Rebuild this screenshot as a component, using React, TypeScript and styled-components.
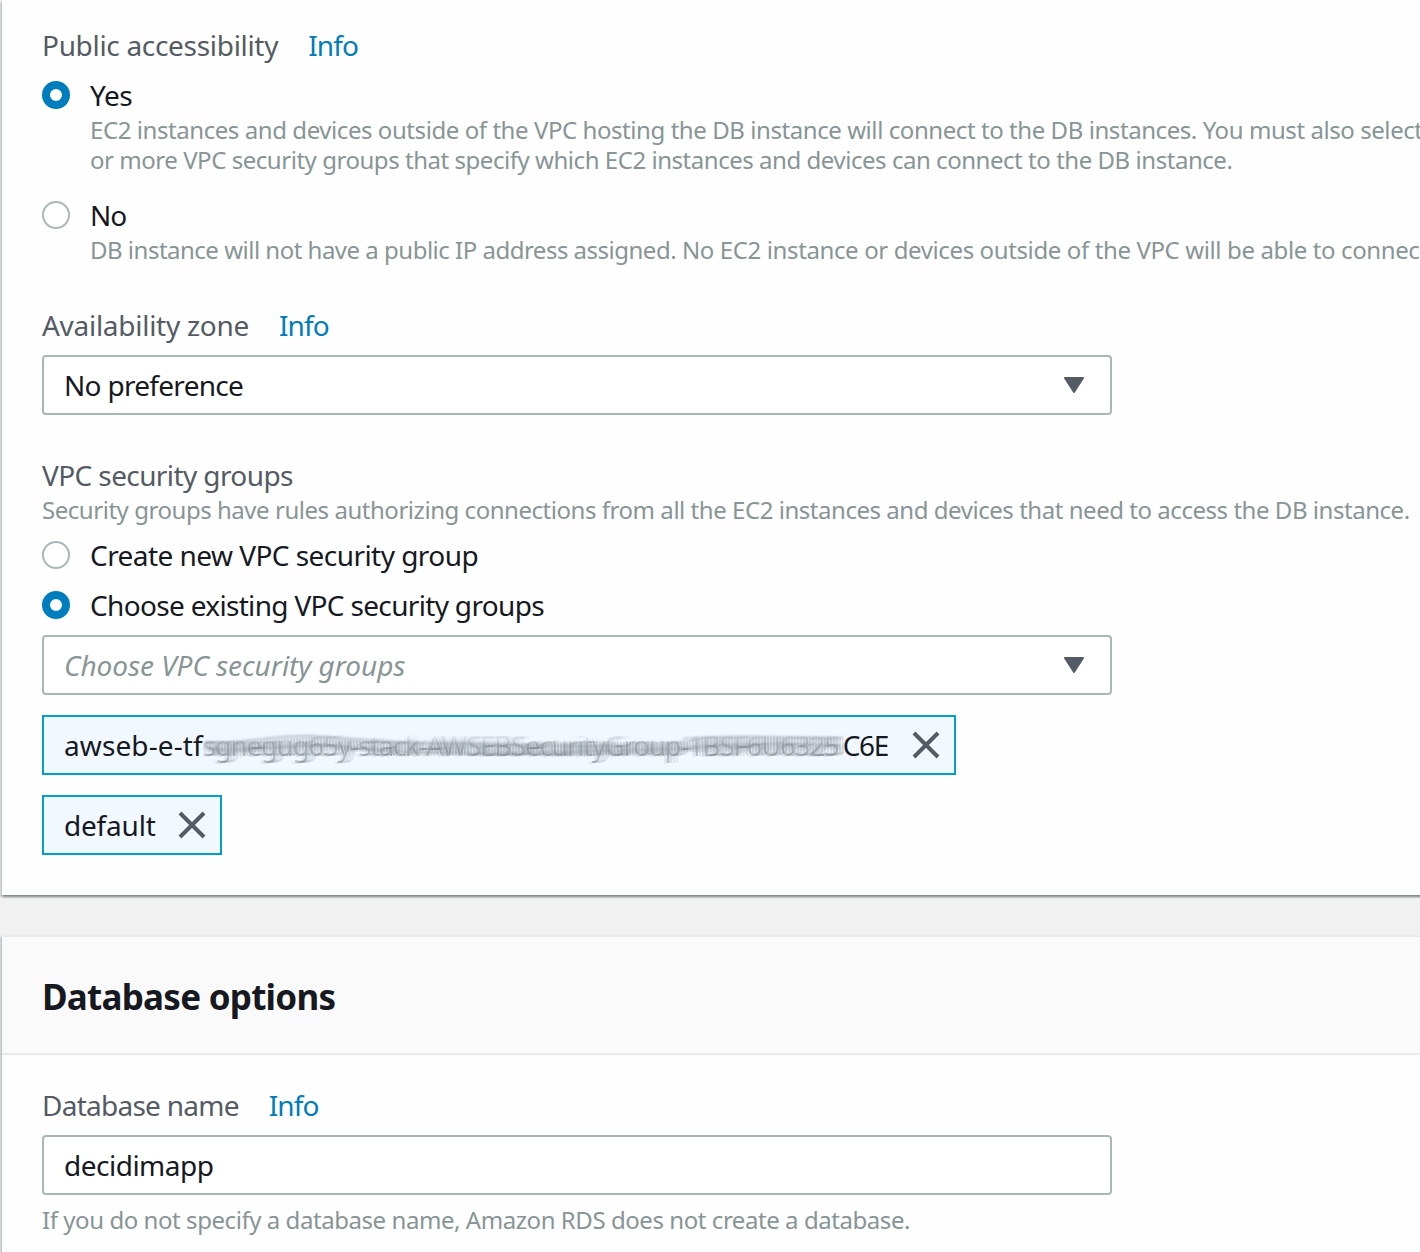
import React from 'react';
import styled, { createGlobalStyle } from 'styled-components';

const colors = {
  page: '#f1f1f1',
  card: '#fefefe',
  header: '#fafafa',
  divider: '#eaeaea',
  text: '#16191f',
  label: '#545b64',
  hint: '#879596',
  link: '#007dbc',
  border: '#aab7b8',
  token: '#00a1c9',
  tokenFill: '#f1f8ff',
};

const GlobalStyle = createGlobalStyle`
  body {
    margin: 0;
    background: ${colors.page};
    color: ${colors.text};
    font-family: 'Noto Sans', 'Open Sans', sans-serif;
    overflow: hidden;
  }
  *, *::before, *::after { box-sizing: border-box; }
`;

const Page = styled.main`
  display: flex;
  flex-direction: column;
  gap: 40px;
  height: 1252px;
  padding-left: 2px;
  overflow: hidden;
`;

const Card = styled.section<{ $ruled?: boolean }>`
  flex: none;
  width: 1600px;
  background: ${colors.card};
  border-top: ${(p) => (p.$ruled ? `2px solid ${colors.divider}` : 'none')};
  box-shadow:
    0 2px 2px rgba(0, 28, 36, 0.3),
    2px 2px 2px rgba(0, 28, 36, 0.15),
    -2px 2px 2px rgba(0, 28, 36, 0.15);
`;

const CardHeader = styled.header`
  display: flex;
  align-items: center;
  height: 118px;
  padding: 4px 40px 0;
  background: ${colors.header};
  border-bottom: 2px solid ${colors.divider};
`;

const CardTitle = styled.h2`
  margin: 0;
  font-size: 35px;
  line-height: 44px;
  font-weight: 700;
  letter-spacing: -0.75px;
`;

const CardBody = styled.div<{ $top: number }>`
  display: flex;
  flex-direction: column;
  gap: 45px;
  padding: ${(p) => p.$top}px 40px 40px;
`;

const Field = styled.div`
  display: flex;
  flex-direction: column;
`;

const LabelRow = styled.div`
  display: flex;
  gap: 30px;
  height: 30px;
`;

const Label = styled.span<{ $tracking: number }>`
  color: ${colors.label};
  font-size: 28px;
  line-height: 30px;
  letter-spacing: ${(p) => p.$tracking}px;
  white-space: nowrap;
`;

const InfoLink = styled.a`
  color: ${colors.link};
  font-size: 28px;
  line-height: 30px;
  letter-spacing: -0.9px;
  text-decoration: none;
`;

const Hint = styled.p<{ $gap?: number; $tracking?: number }>`
  margin: ${(p) => p.$gap ?? 0}px 0 0;
  color: ${colors.hint};
  font-size: 24px;
  line-height: 30px;
  letter-spacing: ${(p) => p.$tracking ?? -0.46}px;
  white-space: pre;
`;

const HintLine = styled.span<{ $tracking: number }>`
  display: block;
  letter-spacing: ${(p) => p.$tracking}px;
`;

const RadioList = styled.div<{ $top: number; $gap: number }>`
  display: flex;
  flex-direction: column;
  gap: ${(p) => p.$gap}px;
  margin-top: ${(p) => p.$top}px;
`;

const RadioOption = styled.label`
  display: grid;
  grid-template-columns: 28px auto;
  column-gap: 20px;
  align-items: start;
`;

const RadioDot = styled.span<{ $checked?: boolean }>`
  width: 28px;
  height: 28px;
  margin-top: 1px;
  border-radius: 50%;
  background: #fff;
  border: ${(p) => (p.$checked ? `8px solid ${colors.link}` : `2px solid ${colors.border}`)};
`;

const RadioText = styled.div<{ $tracking: number }>`
  font-size: 28px;
  line-height: 30px;
  letter-spacing: ${(p) => p.$tracking}px;
  white-space: nowrap;
`;

const Control = styled.div<{ $placeholder?: boolean; $tracking: number }>`
  display: flex;
  align-items: center;
  justify-content: space-between;
  width: 1070px;
  height: 60px;
  margin-top: 15px;
  padding: 0 26px 0 20px;
  border: 2px solid ${colors.border};
  border-radius: 4px;
  background: #fff;
  color: ${(p) => (p.$placeholder ? colors.hint : colors.text)};
  font-size: 28px;
  line-height: 56px;
  font-style: ${(p) => (p.$placeholder ? 'italic' : 'normal')};
  letter-spacing: ${(p) => p.$tracking}px;
`;

const TokenList = styled.div`
  display: flex;
  flex-direction: column;
  align-items: flex-start;
  gap: 20px;
  margin-top: 20px;
`;

const Token = styled.div<{ $width: number }>`
  display: flex;
  align-items: center;
  justify-content: space-between;
  width: ${(p) => p.$width}px;
  height: 60px;
  padding: 0 14px 0 20px;
  border: 2px solid ${colors.token};
  background: ${colors.tokenFill};
  font-size: 28px;
  line-height: 56px;
`;

const TokenText = styled.span<{ $tracking: number }>`
  display: flex;
  letter-spacing: ${(p) => p.$tracking}px;
  white-space: nowrap;
`;

const TokenTail = styled.span`
  letter-spacing: -1.3px;
`;

const Smudged = styled.span`
  position: relative;
  width: 640px;
  height: 56px;
`;

const SmudgedText = styled.span`
  display: block;
  letter-spacing: -1.42px;
  color: rgba(60, 66, 74, 0.32);
  filter: blur(0.5px);
  -webkit-mask-image: linear-gradient(transparent 16px, #000 30px, #000 100%);
  mask-image: linear-gradient(transparent 16px, #000 30px, #000 100%);
  text-shadow:
    3px 0 rgba(60, 66, 74, 0.12),
    6px 0 rgba(60, 66, 74, 0.1),
    9px -1px rgba(60, 66, 74, 0.09),
    -3px 1px rgba(60, 66, 74, 0.09);
`;

const SmearDrawing = styled.svg`
  position: absolute;
  left: 0;
  top: 0;
`;

const TriangleIcon = () => (
  <svg width="20" height="16" viewBox="0 0 20 16">
    <path d="M1 1H19L10 15Z" fill={colors.label} stroke={colors.label} strokeWidth="2" strokeLinejoin="round" />
  </svg>
);

const CloseIcon = () => (
  <svg width="28" height="28" viewBox="0 0 28 28">
    <path d="M2 2L26 26M26 2L2 26" stroke={colors.label} strokeWidth="4" fill="none" />
  </svg>
);

const Smear = () => (
  <SmearDrawing width="650" height="56" viewBox="0 0 650 56" fill="none">
    <defs>
      <filter id="soft" x="-5%" y="-50%" width="110%" height="200%">
        <feGaussianBlur stdDeviation="1.3" />
      </filter>
      <pattern id="hatch" width="3" height="60" patternUnits="userSpaceOnUse">
        <path d="M1 0V60" stroke="#6f7780" strokeWidth="1" />
      </pattern>
    </defs>
    <g filter="url(#soft)" stroke="#8b9299">
      <path d="M0 29C40 34 70 23 110 24S180 30 230 30S300 32 340 33S430 32 490 29S580 27 636 27" strokeWidth="12" opacity=".16" />
      <path d="M2 25C50 27 70 17 110 19S180 27 240 26S330 30 420 29" strokeWidth="2" opacity=".4" />
      <path d="M5 32C60 36 90 25 140 30S230 38 300 36S430 35 480 31S590 26 636 29" strokeWidth="2" opacity=".4" />
      <path d="M480 22C520 18 580 20 640 21" strokeWidth="2" opacity=".45" />
    </g>
    <path
      d="M2 25C50 30 80 18 120 21S200 27 240 26L310 27L400 25L480 25L500 20L640 21L642 37L480 35L390 39L200 36L120 34L10 36Z"
      fill="url(#hatch)"
      opacity=".35"
    />
  </SmearDrawing>
);

export default function App() {
  return (
    <>
      <GlobalStyle />
      <Page>
        <Card>
          <CardBody $top={30}>
            <Field>
              <LabelRow>
                <Label $tracking={-0.31}>Public accessibility</Label>
                <InfoLink>Info</InfoLink>
              </LabelRow>
              <RadioList $top={20} $gap={25}>
                <RadioOption>
                  <RadioDot $checked />
                  <div>
                    <RadioText $tracking={-0.5}>Yes</RadioText>
                    <Hint $gap={5}>
                      <HintLine $tracking={-0.43}>
                        EC2 instances and devices outside of the VPC hosting the DB instance will connect to the DB instances. You must also select one
                      </HintLine>
                      <HintLine $tracking={-0.46}>
                        or more VPC security groups that specify which EC2 instances and devices can connect to the DB instance.
                      </HintLine>
                    </Hint>
                  </div>
                </RadioOption>
                <RadioOption>
                  <RadioDot />
                  <div>
                    <RadioText $tracking={-1}>No</RadioText>
                    <Hint $gap={5}>
                      <HintLine $tracking={-0.5}>
                        DB instance will not have a public IP address assigned.
                        <HintTail> No EC2 instance or devices outside of the VPC will be able to connect.</HintTail>
                      </HintLine>
                    </Hint>
                  </div>
                </RadioOption>
              </RadioList>
            </Field>
            <Field>
              <LabelRow>
                <Label $tracking={-0.28}>Availability zone</Label>
                <InfoLink>Info</InfoLink>
              </LabelRow>
              <Control $tracking={-0.7}>
                No preference
                <TriangleIcon />
              </Control>
            </Field>
            <Field>
              <Label $tracking={-0.6}>VPC security groups</Label>
              <Hint $gap={5}>
                Security groups have rules authorizing connections from all the EC2 instances and devices that need to access the DB instance.
              </Hint>
              <RadioList $top={15} $gap={20}>
                <RadioOption>
                  <RadioDot />
                  <RadioText $tracking={-0.55}>Create new VPC security group</RadioText>
                </RadioOption>
                <RadioOption>
                  <RadioDot $checked />
                  <RadioText $tracking={-0.67}>Choose existing VPC security groups</RadioText>
                </RadioOption>
              </RadioList>
              <Control $placeholder $tracking={-0.05}>
                Choose VPC security groups
                <TriangleIcon />
              </Control>
              <TokenList>
                <Token $width={914}>
                  <TokenText $tracking={0.1}>
                    awseb-e-tf
                    <Smudged>
                      <SmudgedText>sgnegug65y-stack-AWSEBSecurityGroup-1BSF6U6325</SmudgedText>
                      <Smear />
                    </Smudged>
                    <TokenTail>C6E</TokenTail>
                  </TokenText>
                  <CloseIcon />
                </Token>
                <Token $width={180}>
                  <TokenText $tracking={-0.2}>default</TokenText>
                  <CloseIcon />
                </Token>
              </TokenList>
            </Field>
          </CardBody>
        </Card>
        <Card $ruled>
          <CardHeader>
            <CardTitle>Database options</CardTitle>
          </CardHeader>
          <CardBody $top={35}>
            <Field>
              <LabelRow>
                <Label $tracking={-0.74}>Database name</Label>
                <InfoLink>Info</InfoLink>
              </LabelRow>
              <Control $tracking={-0.5}>decidimapp</Control>
              <Hint $gap={10} $tracking={-0.44}>
                If you do not specify a database name, Amazon RDS does not create a database.
              </Hint>
            </Field>
          </CardBody>
        </Card>
      </Page>
    </>
  );
}

const HintTail = styled.span`
  letter-spacing: -0.38px;
`;
